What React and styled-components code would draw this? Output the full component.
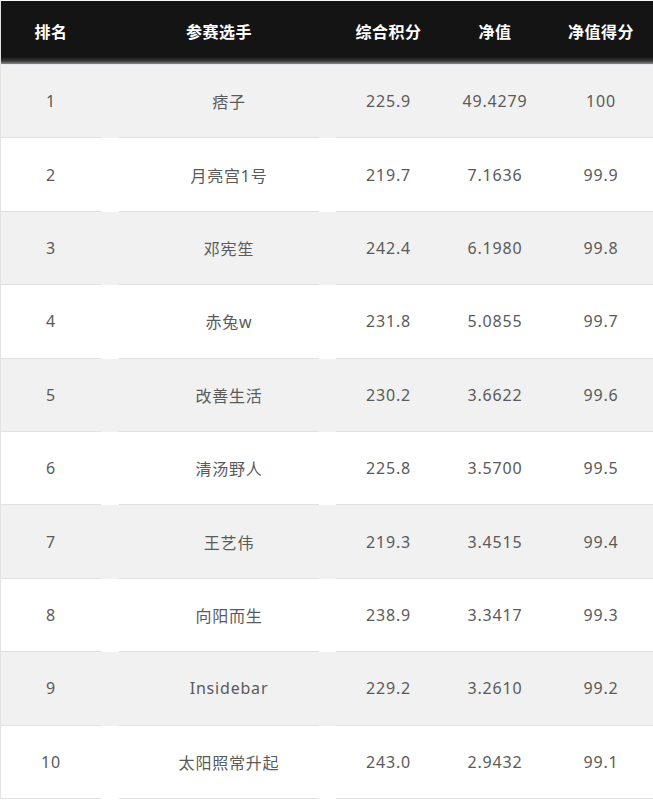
import React from "react"
import styled, { createGlobalStyle } from "styled-components"

const GlobalStyle = createGlobalStyle`
    html, body {
        margin: 0;
        padding: 0;
        background: #fff;
    }
    body {
        font-family: "Noto Sans", "Noto Sans CJK SC", sans-serif;
    }
`

const rows = [
    [1, "痞子", "225.9", "49.4279", "100"],
    [2, "月亮宫1号", "219.7", "7.1636", "99.9"],
    [3, "邓宪笙", "242.4", "6.1980", "99.8"],
    [4, "赤兔w", "231.8", "5.0855", "99.7"],
    [5, "改善生活", "230.2", "3.6622", "99.6"],
    [6, "清汤野人", "225.8", "3.5700", "99.5"],
    [7, "王艺伟", "219.3", "3.4515", "99.4"],
    [8, "向阳而生", "238.9", "3.3417", "99.3"],
    [9, "Insidebar", "229.2", "3.2610", "99.2"],
    [10, "太阳照常升起", "243.0", "2.9432", "99.1"],
]

const columns = "100px 18px 200px 17px 105px 108px 1fr"

const Board = styled.div`
    width: 653px;
    border-top: 1px solid #fafafa;
    border-left: 1px solid #e2e2e2;
    box-sizing: border-box;
`

const Head = styled.div`
    display: grid;
    grid-template-columns: ${columns};
    height: 63px;
    align-items: center;
    background: linear-gradient(to bottom, #141414 0, #141414 56px, #3a3a3a 60px, #8a8a8a 63px);
    border-bottom: 1px solid #e4e7ec;
    color: #fff;
    font-family: "Noto Sans CJK SC", sans-serif;
    font-weight: 700;
    font-size: 16px;
    letter-spacing: 0.5px;
`

const Row = styled.div`
    display: grid;
    grid-template-columns: ${columns};
    background: ${({ $odd }) => ($odd ? "#f1f1f1" : "#fff")};
`

const Cell = styled.div`
    grid-column: ${({ $col }) => $col};
    height: 72.4px;
    display: flex;
    align-items: center;
    justify-content: center;
    padding-left: ${({ $shift }) => ($shift ? "20px" : "0")};
    border-bottom: 1px solid #e1e1e1;
    color: #5a5a5a;
    font-size: 16px;
    letter-spacing: 0.8px;
`

const HeadCell = styled.div`
    grid-column: ${({ $col }) => $col};
    text-align: center;
    padding-bottom: 4px;
`

const cols = [1, 3, 5, 6, 7]
const titles = ["排名", "参赛选手", "综合积分", "净值", "净值得分"]

export default () => (
    <>
        <GlobalStyle />
        <Board>
            <Head>
                {titles.map((t, i) => (
                    <HeadCell key={t} $col={cols[i]}>{t}</HeadCell>
                ))}
            </Head>
            {rows.map((r, idx) => (
                <Row key={r[0]} $odd={idx % 2 === 0}>
                    {r.map((v, i) => (
                        <Cell key={i} $col={cols[i]} $shift={i === 1}>{v}</Cell>
                    ))}
                </Row>
            ))}
        </Board>
    </>
)
